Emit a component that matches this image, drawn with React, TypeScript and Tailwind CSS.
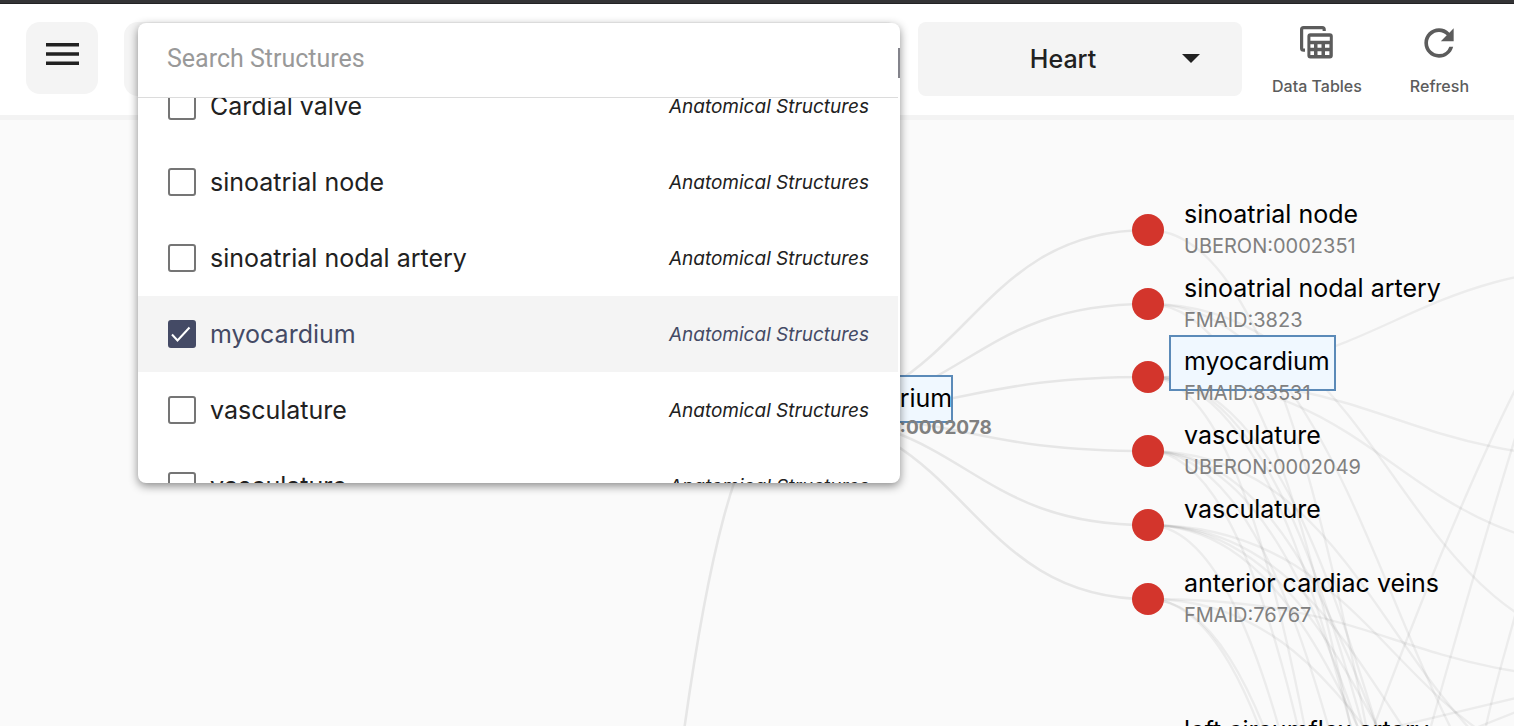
import { MdRefresh } from "react-icons/md";

type Option = { id: string; label: string; checked?: boolean };
type TreeNode = { y: number; label: string; code?: string; selected?: boolean };

const OPTIONS: Option[] = [
  { id: "cardial-valve", label: "Cardial valve" },
  { id: "sinoatrial-node", label: "sinoatrial node" },
  { id: "sinoatrial-nodal-artery", label: "sinoatrial nodal artery" },
  { id: "myocardium", label: "myocardium", checked: true },
  { id: "vasculature-1", label: "vasculature" },
  { id: "vasculature-2", label: "vasculature" },
];

const PARENT = { x: 784, y: 294 };
const COLUMN_X = 1148;
const NEXT_COLUMN_X = 1640;

const NODES: TreeNode[] = [
  { y: 110, label: "sinoatrial node", code: "UBERON:0002351" },
  { y: 184, label: "sinoatrial nodal artery", code: "FMAID:3823" },
  { y: 257, label: "myocardium", code: "FMAID:83531", selected: true },
  { y: 331, label: "vasculature", code: "UBERON:0002049" },
  { y: 405, label: "vasculature" },
  { y: 479, label: "anterior cardiac veins", code: "FMAID:76767" },
  { y: 626, label: "left circumflex artery" },
];

// Links from each structure to its entries in the next column: [from y, to y].
const LINKS: [number, number][] = [
  [110, 1385],
  [184, 1464],
  [184, 530],
  [184, 775],
  [257, 145],
  [257, 340],
  [257, 432],
  [257, 2164],
  [257, 1314],
  [257, 1187],
  [257, 1068],
  [331, 1997],
  [331, 1418],
  [331, 1106],
  [331, 971],
  [331, 688],
  [405, 2066],
  [405, 971],
  [405, 872],
  [405, 782],
  [405, 660],
  [479, 1990],
  [479, 1860],
  [479, 815],
  [479, 560],
];

function link(x0: number, y0: number, x1: number, y1: number) {
  const mx = (x0 + x1) / 2;
  return `M${x0},${y0}C${mx},${y0} ${mx},${y1} ${x1},${y1}`;
}

function MenuIcon() {
  return (
    <svg width="33" height="22" viewBox="0 0 33 22" fill="#212121" aria-hidden="true">
      <path d="M0 0h33v3.6H0zM0 9.2h33v3.6H0zM0 18.4h33V22H0z" />
    </svg>
  );
}

function TablesIcon() {
  return (
    <svg width="34" height="34" viewBox="0 0 34 34" aria-hidden="true">
      <path
        d="M24.2 5V3.6Q24.2 1.6 22.2 1.6H3.6Q1.6 1.6 1.6 3.6V22.2Q1.6 24.2 3.6 24.2H5"
        fill="none"
        stroke="#5c5c5c"
        strokeWidth="3.2"
      />
      <path
        fill="#5c5c5c"
        fillRule="evenodd"
        d="M10.4 7.2h19.4a3 3 0 0 1 3 3v19.4a3 3 0 0 1-3 3H10.4a3 3 0 0 1-3-3V10.2a3 3 0 0 1 3-3zM10.4 10.8v4h19.4v-4zM10.4 18.2v3.6h3.6v-3.6zM17.5 18.2v3.6h4v-3.6zM25 18.2v3.6h4.4v-3.6zM10.4 25.2v3.8h3.6v-3.8zM17.5 25.2v3.8h4v-3.8zM25 25.2v3.8h4.4v-3.8z"
      />
    </svg>
  );
}

function SearchPanel() {
  return (
    <div className="absolute top-px right-0 left-[14px] z-10 flex h-[460px] flex-col overflow-hidden rounded-lg bg-white shadow-[0_3px_10px_rgba(0,0,0,0.45)]">
      <div className="mr-0.5 border-b border-[#dcdcdc]">
        <input
          type="text"
          aria-label="Search Structures"
          placeholder="Search Structures"
          className="block h-[74px] w-full bg-transparent px-[29px] pb-1 font-['Roboto',sans-serif] text-[25px] text-[#212121] outline-none placeholder:text-[#999999]"
        />
      </div>
      <div className="absolute top-[25px] right-0 h-[30px] w-0.5 bg-[#83838b]" />
      <ul className="-mt-[30px] mr-0.5 overflow-hidden [clip-path:inset(30px_0_0_0)]">
        {OPTIONS.map((option) => (
          <li key={option.id}>
            <label
              htmlFor={option.id}
              className="flex h-[76px] items-center gap-[14px] pr-[29px] pl-[30px] text-[#212121] has-checked:bg-[#f4f4f4] has-checked:text-[#444a65]"
            >
              <span className="relative size-7 shrink-0">
                <input
                  id={option.id}
                  type="checkbox"
                  defaultChecked={option.checked}
                  className="peer block size-7 appearance-none rounded-[3px] border-2 border-[#757575] checked:border-[#444a65] checked:bg-[#444a65]"
                />
                <svg
                  viewBox="0 0 28 28"
                  className="pointer-events-none absolute inset-0 hidden size-7 peer-checked:block"
                  aria-hidden="true"
                >
                  <path d="M4 14.5L9.5 20.5L21.5 7.5" fill="none" stroke="#ffffff" strokeWidth="2" />
                </svg>
              </span>
              <span className="flex-1 pt-0.5 text-[25px]">{option.label}</span>
              <span className="pt-0.5 text-[19px] italic">Anatomical Structures</span>
            </label>
          </li>
        ))}
      </ul>
    </div>
  );
}

function Header() {
  return (
    <header className="flex h-[116px] shrink-0 items-start border-b-[5px] border-[#f3f3f3] bg-white pt-[18px] pr-[45px] pl-[26px]">
      <button
        type="button"
        aria-label="Menu"
        className="flex size-[72px] shrink-0 items-center justify-center rounded-[14px] bg-[#f4f4f4] pb-2"
      >
        <MenuIcon />
      </button>
      <div className="relative ml-[26px] h-[74px] flex-1 rounded-[14px] bg-[#f4f4f4]">
        <SearchPanel />
      </div>
      <div className="relative ml-[18px] w-[324px] shrink-0">
        <select
          aria-label="Organ"
          className="block h-[74px] w-full appearance-none rounded-lg bg-[#f4f4f4] pt-0.5 pr-[34px] text-center text-[25px] font-medium text-[#212121]"
        >
          <option>Heart</option>
        </select>
        <svg
          width="18"
          height="9"
          viewBox="0 0 18 9"
          className="pointer-events-none absolute top-8 right-[42px]"
          aria-hidden="true"
        >
          <path d="M0 0h18l-9 9z" fill="#212121" />
        </svg>
      </div>
      <button
        type="button"
        className="ml-[30px] flex shrink-0 flex-col items-center text-base font-medium text-[#5c5c5c]"
      >
        <span className="flex h-[42px] items-center">
          <TablesIcon />
        </span>
        <span className="mt-2.5">Data Tables</span>
      </button>
      <button
        type="button"
        className="ml-12 flex shrink-0 flex-col items-center text-base font-medium text-[#5c5c5c]"
      >
        <span className="flex h-[42px] items-center">
          <MdRefresh size={44} />
        </span>
        <span className="mt-2.5">Refresh</span>
      </button>
    </header>
  );
}

function Tree() {
  return (
    <main className="relative flex-1 overflow-hidden bg-[#fafafa]">
      <svg className="absolute inset-0 size-full" fill="none" aria-hidden="true">
        <g stroke="#000000" strokeOpacity="0.08" strokeWidth="2.6">
          <path d={link(420, 2712, PARENT.x, PARENT.y)} />
          {NODES.slice(0, 6).map((node) => (
            <path key={node.y} d={link(PARENT.x, PARENT.y, COLUMN_X, node.y)} />
          ))}
        </g>
        <g stroke="#000000" strokeOpacity="0.055" strokeWidth="2.4">
          {LINKS.map(([from, to]) => (
            <path key={`${from}-${to}`} d={link(COLUMN_X, from, NEXT_COLUMN_X, to)} />
          ))}
          <path d="M1374 606C1410 508 1465 370 1516 268" />
          <path d="M1431 606C1455 520 1490 400 1516 315" />
          <path d="M1486 606C1496 560 1506 530 1516 492" />
          <path d="M1390 608Q1450 594 1516 578" />
          <path d="M1478 607Q1496 600 1516 592" />
        </g>
        <g fill="#d3352c">
          {NODES.slice(0, 6).map((node) => (
            <circle key={node.y} cx={COLUMN_X} cy={node.y} r="16" />
          ))}
        </g>
      </svg>

      <div className="absolute top-[255px] left-[806px] h-12 w-[147px] border-2 border-[#5b8ab8] bg-[#f0f8ff]" />
      <div className="absolute top-[263px] left-[810px] flex flex-col gap-[3px] whitespace-nowrap">
        <span className="text-[25px] leading-[30px] text-black">Right atrium</span>
        <span className="pl-[10px] text-[19px] leading-6 font-bold text-[#808080]">UBERON:0002078</span>
      </div>

      {NODES.map((node) => (
        <div
          key={node.y}
          className="absolute left-[1184px] -mt-[31px] flex flex-col gap-[5px] whitespace-nowrap"
          style={{ top: node.y }}
        >
          {node.selected && (
            <span className="absolute -top-[11px] -left-[15px] h-14 w-[167px] border-2 border-[#5b8ab8] bg-[#f0f8ff]" />
          )}
          <span className="relative text-[25px] leading-[30px] text-black">{node.label}</span>
          {node.code && <span className="relative text-xl leading-6 text-[#808080]">{node.code}</span>}
        </div>
      ))}
    </main>
  );
}

export default function App() {
  return (
    <div className="flex h-screen flex-col overflow-hidden font-['Inter',sans-serif]">
      <div className="h-1 shrink-0 border-b border-[#222224] bg-[#343436]" />
      <Header />
      <Tree />
    </div>
  );
}
